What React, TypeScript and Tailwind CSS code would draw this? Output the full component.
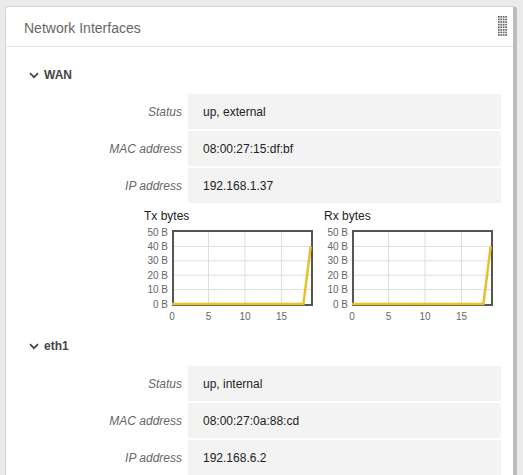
import React from 'react';

type Row = { label: string; value: string };

const wan: Row[] = [
  { label: 'Status', value: 'up, external' },
  { label: 'MAC address', value: '08:00:27:15:df:bf' },
  { label: 'IP address', value: '192.168.1.37' },
];

const eth1: Row[] = [
  { label: 'Status', value: 'up, internal' },
  { label: 'MAC address', value: '08:00:27:0a:88:cd' },
  { label: 'IP address', value: '192.168.6.2' },
];

const Grip = () => (
  <svg width="9" height="21" viewBox="0 0 9 21" className="fill-[#666]">
    {Array.from({ length: 8 }).map((_, r) =>
      Array.from({ length: 4 }).map((_, c) => (
        <rect key={`${r}-${c}`} x={c * 2.4} y={r * 2.6} width="1.7" height="1.7" />
      ))
    )}
  </svg>
);

const Chevron = () => (
  <svg width="10" height="7" viewBox="0 0 10 7">
    <polyline points="1,1.2 5,5.2 9,1.2" fill="none" stroke="#444" strokeWidth="1.7" />
  </svg>
);

const Heading = ({ title }: { title: string }) => (
  <div className="flex h-[20px] items-center gap-[5px] pl-[23px] text-[12px] font-bold text-[#444]">
    <Chevron />
    <span>{title}</span>
  </div>
);

const InfoRows = ({ rows }: { rows: Row[] }) => (
  <div className="flex flex-col gap-[2px]">
    {rows.map((r) => (
      <div key={r.label} className="flex h-[35px] items-center">
        <div className="w-[176px] text-right text-[12px] italic text-[#666]">{r.label}</div>
        <div className="ml-[6px] flex h-full w-[313px] items-center bg-[#f3f3f3] pl-[15px] text-[12px] text-[#222]">
          {r.value}
        </div>
      </div>
    ))}
  </div>
);

const xs = (v: number) => 32 + 7.3 * v;
const ys = (b: number) => 80 - 1.44 * b;

const Chart = ({ title }: { title: string }) => {
  const pts = Array.from({ length: 19 }).map((_, i) => `${xs(i)},${ys(0)}`);
  pts.push(`${xs(19)},${ys(40)}`);
  return (
    <div className="flex w-[175px] flex-col">
      <div className="h-[15px] pl-[4px] text-[12px] leading-[15px] text-[#222]">{title}</div>
      <svg width="175" height="100" viewBox="0 0 175 100" fontFamily="'Liberation Sans', Arial, sans-serif">
        {[5, 10, 15].map((v) => (
          <line key={v} x1={xs(v)} x2={xs(v)} y1={7} y2={81} stroke="#dedede" strokeWidth="1" />
        ))}
        {[10, 20, 30, 40].map((b) => (
          <line key={b} x1={33} x2={172} y1={ys(b)} y2={ys(b)} stroke="#dedede" strokeWidth="1" />
        ))}
        <rect x="33" y="7" width="139" height="74" fill="none" stroke="#555" strokeWidth="2" />
        <polyline points={pts.join(' ')} fill="none" stroke="#e6c229" strokeWidth="2.5" />
        {[0, 10, 20, 30, 40, 50].map((b) => (
          <text key={b} x="28" y={ys(b) + 3.5} textAnchor="end" fontSize="10" fill="#666">
            {b} B
          </text>
        ))}
        {[0, 5, 10, 15].map((v) => (
          <text key={v} x={xs(v)} y="96" textAnchor="middle" fontSize="10" fill="#666">
            {v}
          </text>
        ))}
      </svg>
    </div>
  );
};

export default function App() {
  return (
    <div className="min-h-screen bg-[#ebebeb] pl-[5px] pt-[6px] font-['Liberation_Sans',Arial,sans-serif]">
      <div className="w-[512px] rounded-t-[4px] border border-[#d4d4d4] border-r-[4px] border-r-[#bcbcbc] bg-white">
        <div className="flex h-[40px] items-center justify-between border-b border-[#e6e6e6] pl-[18px] pr-[6px]">
          <span className="pt-[3px] text-[14px] text-[#666]">Network Interfaces</span>
          <Grip />
        </div>
        <div className="pb-[10px]">
          <div className="mt-[18px] mb-[9px]">
            <Heading title="WAN" />
          </div>
          <InfoRows rows={wan} />
          <div className="ml-[134px] mt-[6px] flex gap-[5px]">
            <Chart title="Tx bytes" />
            <Chart title="Rx bytes" />
          </div>
          <div className="mt-[12px] mb-[10px]">
            <Heading title="eth1" />
          </div>
          <InfoRows rows={eth1} />
        </div>
      </div>
    </div>
  );
}
